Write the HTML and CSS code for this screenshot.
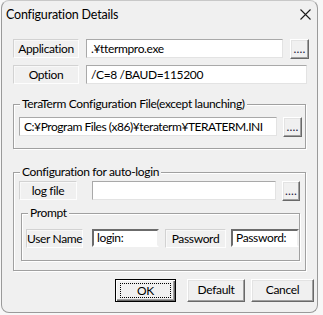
FILE: index.html
```html
<!DOCTYPE html>
<html>
<head>
<meta charset="utf-8">
<link rel="stylesheet" href="styles.css">
</head>
<body>
<div class="window">
  <div class="titlebar">
    <span class="title">Configuration Details</span>
    <svg class="close" width="11" height="11" viewBox="0 0 11 11"><path d="M0.5 0.5 L10.5 10.5 M10.5 0.5 L0.5 10.5" stroke="#1a1a1a" stroke-width="1.1" fill="none"/></svg>
  </div>
  <div class="content">
    <div class="row r1">
      <div class="label lbl-app">Application</div>
      <div class="edit e-app">.¥ttermpro.exe</div>
      <div class="btn dots b-app">....</div>
    </div>
    <div class="row r2">
      <div class="label lbl-app">Option</div>
      <div class="edit e-opt">/C=8 /BAUD=115200</div>
    </div>
    <div class="group g1">
      <span class="legend">TeraTerm Configuration File(except launching)</span>
      <div class="row">
        <div class="edit e-ini">C:¥Program Files (x86)¥teraterm¥TERATERM.INI</div>
        <div class="btn dots b-ini">....</div>
      </div>
    </div>
    <div class="group g2">
      <span class="legend">Configuration for auto-login</span>
      <div class="row">
        <div class="label lbl-log">log file</div>
        <div class="edit e-log"></div>
        <div class="btn dots b-log">....</div>
      </div>
      <div class="group g3">
        <span class="legend">Prompt</span>
        <div class="row">
          <div class="label lbl-user">User Name</div>
          <div class="edit e-user sunk">login:</div>
          <div class="label lbl-pass">Password</div>
          <div class="edit e-pass sunk">Password:</div>
        </div>
      </div>
    </div>
    <div class="buttons">
      <div class="btn push ok"><span class="focus">OK</span></div>
      <div class="btn push def">Default</div>
      <div class="btn push cancel">Cancel</div>
    </div>
  </div>
</div>
</body>
</html>
```
FILE: styles.css
```css
html, body {
  margin: 0;
  padding: 0;
}
body {
  width: 323px;
  height: 315px;
  background: #f7f7f7;
  font-family: "Lato", "Roboto", sans-serif;
  font-size: 12px;
  letter-spacing: -0.35px;
  color: #000;
  overflow: hidden;
}
.window {
  margin-left: 1px;
  width: 315px;
  height: 311px;
  background: #f0f0f0;
  border: 1px solid #9a9a9a;
  border-top-color: #c8c8c8;
  border-radius: 8px;
  position: relative;
}
.titlebar {
  height: 29px;
  display: flex;
  align-items: center;
  justify-content: space-between;
  padding: 0 6px 0 4px;
}
.title {
  font-size: 12.5px;
  letter-spacing: -0.2px;
  margin-top: -2px;
}
.close {
  margin-top: -3px;
}
.content {
  padding: 9px 0 0 11px;
}
.row {
  display: flex;
  align-items: flex-start;
}
.label {
  height: 17px;
  line-height: 17px;
  text-align: center;
  white-space: nowrap;
  border: 1px solid #d2d2d2;
  border-right-color: #fdfdfd;
  border-bottom-color: #fdfdfd;
  box-shadow: inset 1px 1px 0 #f8f8f8;
  color: #000;
}
.edit {
  height: 17px;
  line-height: 17px;
  background: #fff;
  border: 1px solid #a9a9a9;
  border-right-color: #e3e3e3;
  border-bottom-color: #e3e3e3;
  padding-left: 4px;
  box-sizing: content-box;
  white-space: nowrap;
  overflow: hidden;
}
.edit.sunk {
  border: 2px solid #6b6b6b;
  border-right-color: #f0f0f0;
  border-bottom-color: #fff;
  height: 14px;
  line-height: 14px;
  padding-left: 3px;
}
.btn {
  box-sizing: border-box;
  background: #f0f0f0;
  border: 1px solid #fff;
  border-right-color: #696969;
  border-bottom-color: #696969;
  box-shadow: inset -1px -1px 0 #a0a0a0, inset 1px 1px 0 #e3e3e3;
  text-align: center;
  white-space: nowrap;
}
.dots {
  width: 19px;
  height: 20px;
  line-height: 18px;
  letter-spacing: 0.2px;
  color: #1a1a40;
}
.r1 { height: 20px; }
.r2 { margin-top: 6px; }
.lbl-app { width: 64px; }
.e-app { width: 191px; margin-left: 7px; }
.b-app { margin-left: 7px; }
.e-opt { width: 215px; margin-left: 7px; }

.group {
  position: relative;
  border: 1px solid #a0a0a0;
  box-shadow: inset 1px 1px 0 #fff, 1px 1px 0 #fff;
  box-sizing: border-box;
}
.legend {
  position: absolute;
  top: -9px;
  left: 6px;
  padding: 0 2px;
  background: #f0f0f0;
  line-height: 16px;
  white-space: nowrap;
}
.g1 {
  width: 293px;
  height: 45px;
  margin-top: 20px;
  padding: 12px 0 0 5px;
}
.e-ini { width: 252px; letter-spacing: -0.45px; }
.b-ini { margin-left: 6px; }
.g2 {
  width: 293px;
  height: 99px;
  margin-top: 23px;
  padding: 8px 0 0 5px;
}
.lbl-log { width: 56px; }
.e-log { width: 178px; margin-left: 15px; }
.b-log { margin-left: 6px; width: 18px; height: 20px; }
.g3 {
  width: 279px;
  height: 48px;
  margin-top: 12px;
  margin-left: 2px;
  padding: 15px 0 0 4px;
}
.lbl-user { width: 55px; }
.e-user { width: 60px; margin-left: 9px; }
.lbl-pass { width: 59px; margin-left: 6px; }
.e-pass { width: 61px; margin-left: 5px; }

.buttons {
  display: flex;
  margin-top: 8px;
  margin-left: 102px;
}
.push {
  height: 23px;
  line-height: 20px;
}
.ok {
  width: 61px;
  border: 1px solid #000;
  box-shadow: inset 1px 1px 0 #fff, inset -1px -1px 0 #696969, inset -2px -2px 0 #a0a0a0;
  padding: 3px 4px;
  line-height: 13px;
}
.focus {
  display: block;
  border: 1px dotted #000;
  height: 13px;
  line-height: 13px;
}
.def { width: 58px; margin-left: 11px; }
.cancel { width: 63px; margin-left: 6px; }
```
